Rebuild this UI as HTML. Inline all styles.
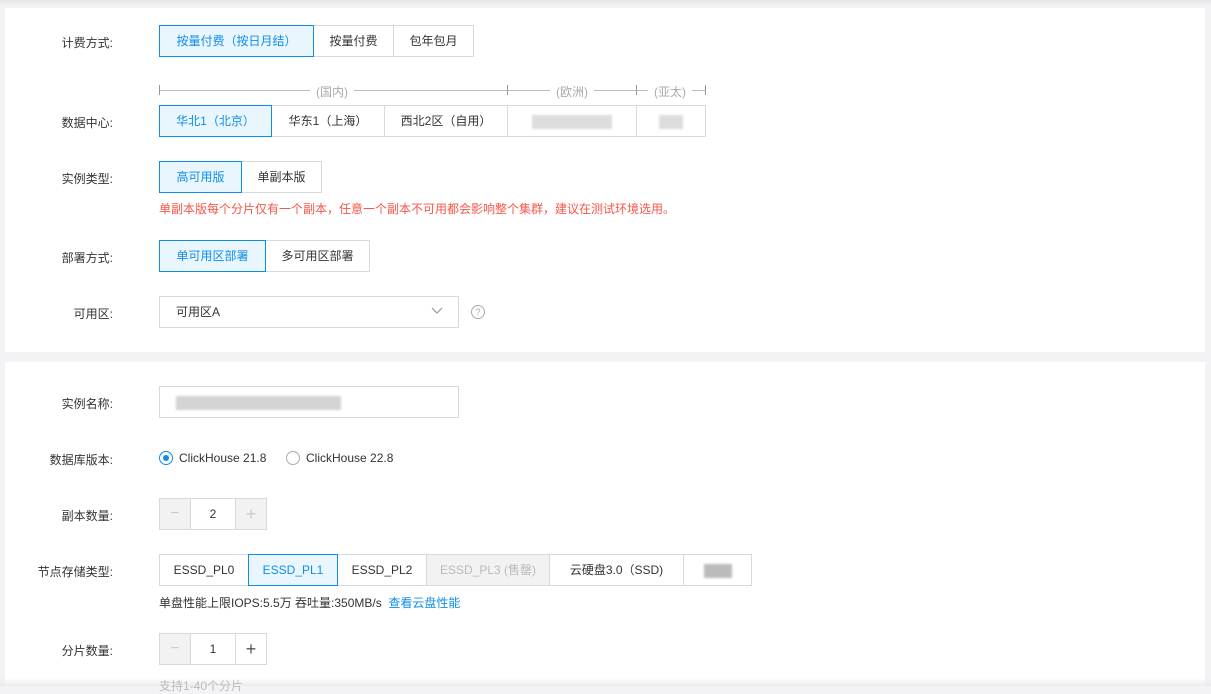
<!DOCTYPE html><html><head><meta charset="utf-8"><style>
body{margin:0;width:1211px;height:686px;overflow:hidden;background:#f3f3f6;font-family:"Liberation Sans","Noto Sans CJK SC",sans-serif;font-size:12px;color:#333;position:relative}
.p{position:absolute;background:#fff;left:5px;width:1200px}
.a{position:absolute}
.l{position:absolute;width:113px;text-align:right;left:0}
.b{position:absolute;height:30px;line-height:30px;border:1px solid #d9d9d9;text-align:center;background:#fff;box-sizing:border-box;height:32px}
.s{border-color:#0e8ee9;background:#e9f6fe;color:#0e8ee9;z-index:2}
.d{background:#f2f2f2;color:#bbb}
.blur{display:inline-block;background:#ddd;height:14px;vertical-align:middle;filter:blur(1px)}
</style></head><body>
<div class="a" style="left:0;top:0;width:1211px;height:6px;background:linear-gradient(#e6e6e8,#f3f3f6)"></div>
<div class="p" style="top:8px;height:344px"></div>
<div class="p" style="top:362px;height:324px"></div>
<div class="a" style="left:0;top:678px;width:1211px;height:8px;background:linear-gradient(rgba(240,240,243,0),#ececef)"></div>

<div class="l" style="top:34px">计费方式:</div>
<div class="b s" style="left:159px;top:25px;width:155px">按量付费（按日月结）</div>
<div class="b" style="left:313px;top:25px;width:81px">按量付费</div>
<div class="b" style="left:393px;top:25px;width:81px">包年包月</div>

<div class="a" style="left:159px;top:90px;width:547px;height:1px;background:#bbb"></div>
<div class="a" style="left:159px;top:85px;width:1px;height:10px;background:#999"></div>
<div class="a" style="left:507px;top:85px;width:1px;height:10px;background:#999"></div>
<div class="a" style="left:636px;top:85px;width:1px;height:10px;background:#999"></div>
<div class="a" style="left:705px;top:85px;width:1px;height:10px;background:#999"></div>
<div class="a" style="left:310px;top:83px;background:#fff;color:#aaa;padding:0 6px">(国内)</div>
<div class="a" style="left:550px;top:83px;background:#fff;color:#aaa;padding:0 6px">(欧洲)</div>
<div class="a" style="left:648px;top:83px;background:#fff;color:#aaa;padding:0 6px">(亚太)</div>

<div class="l" style="top:114px">数据中心:</div>
<div class="b s" style="left:159px;top:105px;width:113px">华北1（北京）</div>
<div class="b" style="left:271px;top:105px;width:114px">华东1（上海）</div>
<div class="b" style="left:384px;top:105px;width:124px">西北2区（自用）</div>
<div class="b" style="left:507px;top:105px;width:130px"><span class="blur" style="width:80px"></span></div>
<div class="b" style="left:636px;top:105px;width:70px"><span class="blur" style="width:24px"></span></div>

<div class="l" style="top:170px">实例类型:</div>
<div class="b s" style="left:159px;top:161px;width:83px">高可用版</div>
<div class="b" style="left:241px;top:161px;width:81px">单副本版</div>
<div class="a" style="left:159px;top:200px;color:#f5574a">单副本版每个分片仅有一个副本，任意一个副本不可用都会影响整个集群，建议在测试环境选用。</div>

<div class="l" style="top:249px">部署方式:</div>
<div class="b s" style="left:159px;top:240px;width:107px">单可用区部署</div>
<div class="b" style="left:265px;top:240px;width:105px">多可用区部署</div>

<div class="l" style="top:305px">可用区:</div>
<div class="b" style="left:159px;top:296px;width:300px;text-align:left;padding-left:16px">可用区A</div>
<svg class="a" style="left:431px;top:307px" width="12" height="8"><path d="M1 1l5 5 5-5" fill="none" stroke="#999" stroke-width="1.2"/></svg>
<div class="a" style="left:471px;top:305px;width:12px;height:12px;border:1px solid #aaa;border-radius:50%;color:#aaa;font-size:9px;line-height:12px;text-align:center">?</div>

<div class="l" style="top:395px">实例名称:</div>
<div class="b" style="left:159px;top:386px;width:300px;text-align:left;padding-left:16px"><span class="blur" style="width:165px;background:#d4d4d4"></span></div>

<div class="l" style="top:451px">数据库版本:</div>
<div class="a" style="left:159px;top:451px;width:12px;height:12px;border:1px solid #0e8ee9;border-radius:50%"><div style="margin:3px;width:6px;height:6px;border-radius:50%;background:#0e8ee9"></div></div>
<div class="a" style="left:179px;top:451px">ClickHouse 21.8</div>
<div class="a" style="left:286px;top:451px;width:12px;height:12px;border:1px solid #aaa;border-radius:50%"></div>
<div class="a" style="left:306px;top:451px">ClickHouse 22.8</div>

<div class="l" style="top:507px">副本数量:</div>
<div class="b d" style="left:159px;top:498px;width:32px;font-size:16px;color:#ccc">−</div>
<div class="b" style="left:190px;top:498px;width:46px">2</div>
<div class="b d" style="left:235px;top:498px;width:32px;font-size:18px;color:#ccc">+</div>

<div class="l" style="top:563px">节点存储类型:</div>
<div class="b" style="left:159px;top:554px;width:90px">ESSD_PL0</div>
<div class="b s" style="left:248px;top:554px;width:90px">ESSD_PL1</div>
<div class="b" style="left:337px;top:554px;width:90px">ESSD_PL2</div>
<div class="b d" style="left:426px;top:554px;width:124px">ESSD_PL3 (售罄)</div>
<div class="b" style="left:549px;top:554px;width:135px">云硬盘3.0（SSD)</div>
<div class="b" style="left:683px;top:554px;width:69px"><span class="blur" style="width:28px;background:#bbb"></span></div>
<div class="a" style="left:159px;top:594px">单盘性能上限IOPS:5.5万 吞吐量:350MB/s &nbsp;<span style="color:#0e8ee9">查看云盘性能</span></div>

<div class="l" style="top:642px">分片数量:</div>
<div class="b d" style="left:159px;top:633px;width:32px;font-size:16px;color:#ccc">−</div>
<div class="b" style="left:190px;top:633px;width:46px">1</div>
<div class="b" style="left:235px;top:633px;width:32px;font-size:18px;color:#555">+</div>
<div class="a" style="left:159px;top:677px;color:#bbb">支持1-40个分片</div>
</body></html>
